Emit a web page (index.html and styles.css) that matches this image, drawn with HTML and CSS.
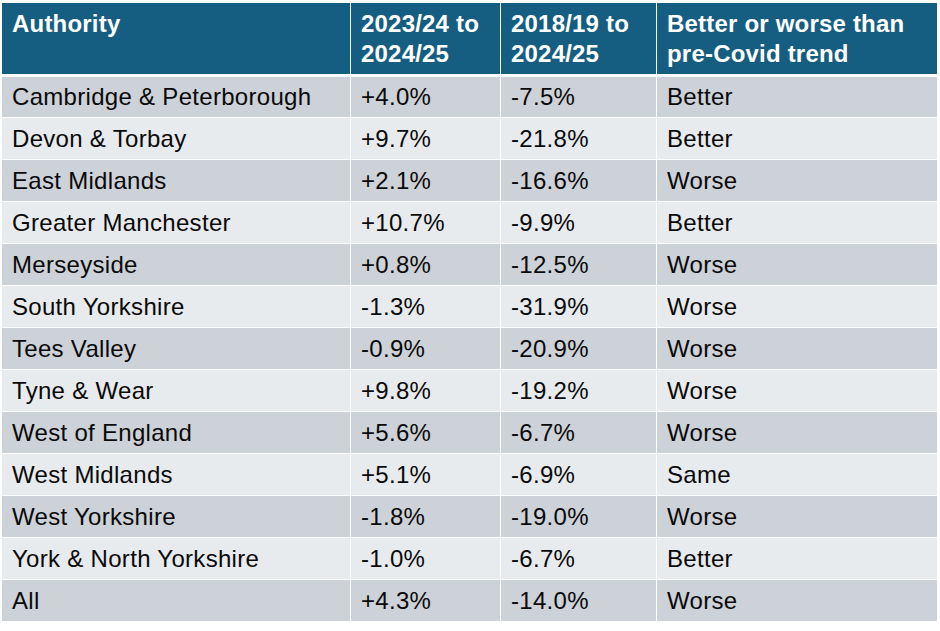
FILE: index.html
```html
<!DOCTYPE html>
<html>
<head>
<meta charset="utf-8">
<link rel="stylesheet" href="styles.css">
</head>
<body>
<table class="data">
  <colgroup>
    <col class="c1"><col class="c2"><col class="c3"><col class="c4">
  </colgroup>
  <thead>
    <tr>
      <th>Authority</th>
      <th>2023/24 to<br>2024/25</th>
      <th>2018/19 to<br>2024/25</th>
      <th>Better or worse than<br>pre-Covid trend</th>
    </tr>
  </thead>
  <tbody>
    <tr><td>Cambridge &amp; Peterborough</td><td>+4.0%</td><td>-7.5%</td><td>Better</td></tr>
    <tr><td>Devon &amp; Torbay</td><td>+9.7%</td><td>-21.8%</td><td>Better</td></tr>
    <tr><td>East Midlands</td><td>+2.1%</td><td>-16.6%</td><td>Worse</td></tr>
    <tr><td>Greater Manchester</td><td>+10.7%</td><td>-9.9%</td><td>Better</td></tr>
    <tr><td>Merseyside</td><td>+0.8%</td><td>-12.5%</td><td>Worse</td></tr>
    <tr><td>South Yorkshire</td><td>-1.3%</td><td>-31.9%</td><td>Worse</td></tr>
    <tr><td>Tees Valley</td><td>-0.9%</td><td>-20.9%</td><td>Worse</td></tr>
    <tr><td>Tyne &amp; Wear</td><td>+9.8%</td><td>-19.2%</td><td>Worse</td></tr>
    <tr><td>West of England</td><td>+5.6%</td><td>-6.7%</td><td>Worse</td></tr>
    <tr><td>West Midlands</td><td>+5.1%</td><td>-6.9%</td><td>Same</td></tr>
    <tr><td>West Yorkshire</td><td>-1.8%</td><td>-19.0%</td><td>Worse</td></tr>
    <tr><td>York &amp; North Yorkshire</td><td>-1.0%</td><td>-6.7%</td><td>Better</td></tr>
    <tr><td>All</td><td>+4.3%</td><td>-14.0%</td><td>Worse</td></tr>
  </tbody>
</table>
</body>
</html>
```

FILE: styles.css
```css
html, body {
  margin: 0;
  padding: 0;
  background: #ffffff;
}
body {
  padding: 2px 0 0 1px;
  font-family: "Liberation Sans", Arial, sans-serif;
}
.data {
  border-collapse: collapse;
  table-layout: fixed;
  width: 936px;
}
.c1 { width: 349px; }
.c2 { width: 150px; }
.c3 { width: 156px; }
.c4 { width: 281px; }
.data th, .data td {
  border: 1px solid #ffffff;
  text-align: left;
  vertical-align: middle;
  padding: 0 0 0 10px;
}
.data th {
  background: #165e81;
  color: #ffffff;
  font-weight: bold;
  font-size: 24px;
  letter-spacing: 0.2px;
  line-height: 30px;
  height: 73px;
  vertical-align: top;
  padding-top: 6px;
  box-sizing: border-box;
  border-bottom: 3px solid #ffffff;
}
.data td {
  color: #0a0a0a;
  font-size: 24px;
  letter-spacing: 0.3px;
  height: 42px;
  box-sizing: border-box;
}
.data tbody tr:nth-child(odd) td { background: #cdd1d8; }
.data tbody tr:nth-child(even) td { background: #e8ebee; }
```
